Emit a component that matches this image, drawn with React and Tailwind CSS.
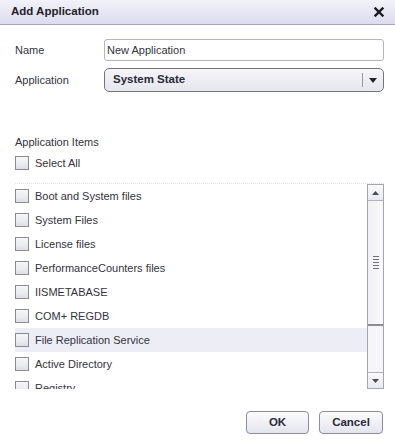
const items = [
  "Boot and System files",
  "System Files",
  "License files",
  "PerformanceCounters files",
  "IISMETABASE",
  "COM+ REGDB",
  "File Replication Service",
  "Active Directory",
  "Registry",
];

function Checkbox() {
  return (
    <span className="block h-[14px] w-[14px] shrink-0 border border-[#8a8a96] bg-gradient-to-b from-[#f6f6fa] via-[#ececf2] to-[#dedee8]" />
  );
}

export default function App() {
  return (
    <div className="h-[444px] w-[395px] overflow-hidden bg-white font-['Liberation_Sans',Arial,sans-serif] text-[11px] text-[#333340]">
      {/* Title bar */}
      <div className="flex h-[25px] items-center justify-between border-b border-[#a4a4bc] bg-gradient-to-b from-[#f2f2fa] to-[#dcdcee] pl-[11px] pr-[11px]">
        <span className="text-[11.5px] font-bold text-[#1e1e28]">Add Application</span>
        <svg width="10" height="10" viewBox="0 0 10 10">
          <path d="M1.5 1.5 L8.5 8.5 M8.5 1.5 L1.5 8.5" stroke="#1a1a22" strokeWidth="2.4" strokeLinecap="square" />
        </svg>
      </div>

      <div className="pl-[15px] pr-[11px]">
        {/* Name */}
        <div className="mt-[14px] flex h-[22px] items-center">
          <span className="w-[89px]">Name</span>
          <div className="flex h-[22px] flex-1 items-center rounded-[3px] border border-[#b4b4c2] bg-white pl-[2px] text-[#333340]">
            New Application
          </div>
        </div>

        {/* Application select */}
        <div className="mt-[7px] flex h-[24px] items-center">
          <span className="w-[89px]">Application</span>
          <div className="flex h-[24px] flex-1 items-center rounded-[5px] border border-[#74747e] bg-gradient-to-b from-[#f4f4f8] to-[#e6e6ee]">
            <span className="flex-1 pl-[8px] text-[11.5px] font-bold text-[#2a2a3a]">System State</span>
            <span className="h-[14px] w-px bg-[#9a9aa6]" />
            <span className="flex w-[20px] justify-center">
              <svg width="8" height="5" viewBox="0 0 8 5">
                <path d="M0 0 H8 L4 5 Z" fill="#22222c" />
              </svg>
            </span>
          </div>
        </div>

        {/* Application items */}
        <div className="mt-[43px] flex h-[14px] items-center">Application Items</div>
        <div className="mt-[7px] flex h-[14px] items-center gap-[6px]">
          <Checkbox />
          <span>Select All</span>
        </div>

        {/* List */}
        <div className="mt-[13px] flex h-[206px] overflow-hidden border-t border-dotted border-[#e4e4ec]">
          <div className="flex-1">
            {items.map((item, i) => (
              <div
                key={item}
                className={`flex h-[24px] items-center gap-[6px] ${i === 6 ? "bg-[#ededf6]" : ""}`}
              >
                <Checkbox />
                <span>{item}</span>
              </div>
            ))}
          </div>
          <div className="flex h-[205px] w-[17px] flex-col border border-[#a4a4b2] bg-[#f6f6fa]">
            <div className="flex h-[16px] items-center justify-center border-b border-[#b0b0bc] bg-gradient-to-b from-[#fafafc] to-[#e8e8f0]">
              <svg width="7" height="4" viewBox="0 0 7 4">
                <path d="M0 4 H7 L3.5 0 Z" fill="#4a4a58" />
              </svg>
            </div>
            <div className="flex h-[125px] flex-col items-center justify-center gap-[2px] border-b-2 border-[#8c8c98] bg-gradient-to-r from-[#f0f0f4] to-[#fafafc]">
              {[0, 1, 2, 3, 4].map((n) => (
                <span key={n} className="h-px w-[6px] bg-[#707080]" />
              ))}
            </div>
            <div className="flex-1" />
            <div className="flex h-[16px] items-center justify-center border-t border-[#b0b0bc] bg-gradient-to-b from-[#fafafc] to-[#e8e8f0]">
              <svg width="7" height="4" viewBox="0 0 7 4">
                <path d="M0 0 H7 L3.5 4 Z" fill="#4a4a58" />
              </svg>
            </div>
          </div>
        </div>

        {/* Buttons */}
        <div className="mt-[22px] flex justify-end gap-[10px] pr-[1px]">
          <button className="h-[23px] w-[63px] rounded-[4px] border border-[#8e8e9a] bg-gradient-to-b from-[#fcfcfe] to-[#e4e4ee] text-[11.5px] font-bold text-[#2a2a3a]">
            OK
          </button>
          <button className="h-[23px] w-[64px] rounded-[4px] border border-[#8e8e9a] bg-gradient-to-b from-[#fcfcfe] to-[#e4e4ee] text-[11.5px] font-bold text-[#2a2a3a]">
            Cancel
          </button>
        </div>
      </div>
    </div>
  );
}
